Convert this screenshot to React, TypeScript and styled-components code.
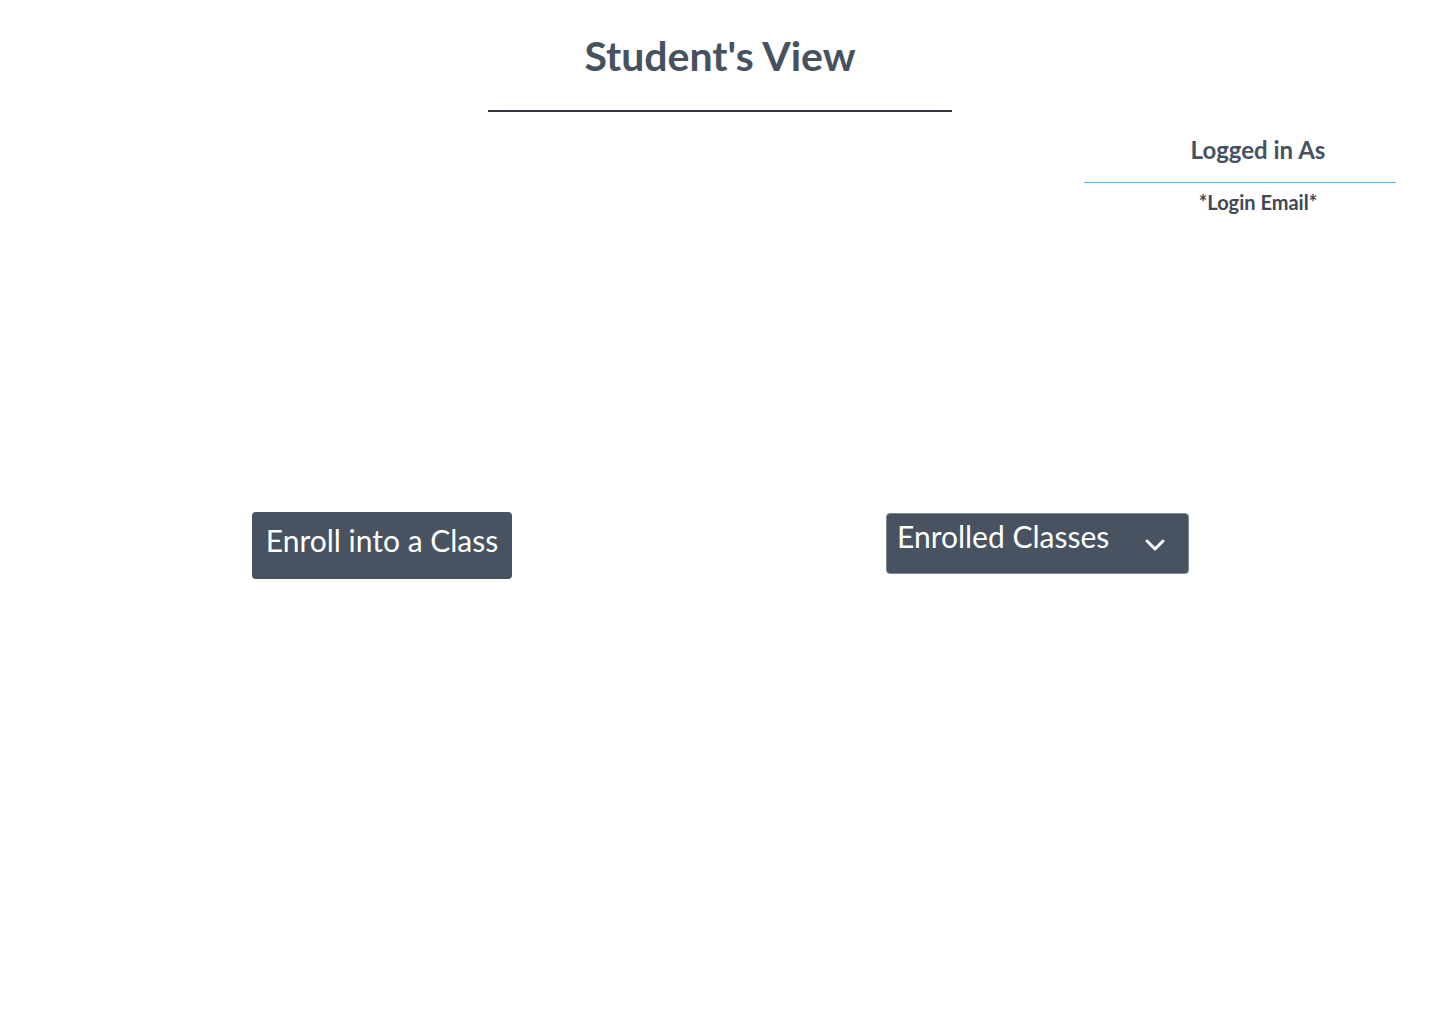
import React from "react";
import styled, { createGlobalStyle } from "styled-components";

const Global = createGlobalStyle`
  html, body { margin: 0; padding: 0; background: #ffffff; }
  body { font-family: Lato, "Noto Sans", sans-serif; color: #475260; }
`;

const Page = styled.div`
  width: 1440px;
  min-height: 1024px;
  display: flex;
  flex-direction: column;
`;

const Header = styled.header`
  display: flex;
  flex-direction: column;
  align-items: center;
  padding-top: 30px;
`;

const Title = styled.h1`
  margin: 0;
  font-size: 41px;
  font-weight: 700;
  line-height: 52px;
  color: #475260;
  width: 464px;
  text-align: center;
  padding-bottom: 28px;
  border-bottom: 2px solid #33373d;
`;

const UserRow = styled.div`
  display: flex;
  justify-content: flex-end;
  padding-right: 44px;
  margin-top: 22px;
`;

const UserCard = styled.div`
  width: 312px;
  display: flex;
  flex-direction: column;
  align-items: stretch;
`;

const UserLabel = styled.div`
  text-align: center;
  font-size: 24px;
  font-weight: 700;
  line-height: 32px;
  padding: 0 0 16px 36px;
  border-bottom: 1px solid #40bdf4;
`;

const UserEmail = styled.div`
  margin-top: 5px;
  padding-left: 36px;
  text-align: center;
  font-size: 20px;
  font-weight: 700;
  line-height: 28px;
  color: #3f4753;
`;

const Actions = styled.div`
  display: flex;
  align-items: flex-start;
  padding-left: 252px;
  margin-top: 296px;
  gap: 374px;
`;

const ActionButton = styled.button`
  font-family: Lato, "Noto Sans", sans-serif;
  font-size: 30px;
  font-weight: 400;
  color: #ffffff;
  background: #485260;
  border: none;
  border-radius: 4px;
  height: 67px;
  width: 260px;
  padding: 0 14px;
  white-space: nowrap;
  line-height: 56px;
  display: flex;
  align-items: flex-start;
  justify-content: center;
  cursor: pointer;
`;

const Dropdown = styled.button`
  font-family: Lato, "Noto Sans", sans-serif;
  font-size: 30px;
  font-weight: 400;
  color: #ffffff;
  background: #485260;
  border: 1px solid #7d8896;
  border-radius: 4px;
  height: 61px;
  width: 303px;
  margin-top: 1px;
  padding: 0 0 0 10px;
  display: flex;
  align-items: flex-start;
  white-space: nowrap;
  cursor: pointer;
`;

const DropLabel = styled.span`
  line-height: 44px;
  flex: 1;
  text-align: left;
`;

const Chevron = styled.span`
  width: 22px;
  margin-right: 22px;
  margin-top: 23px;
  display: flex;
`;

export default function App() {
  return (
    <Page>
      <Global />
      <Header>
        <Title>Student's View</Title>
      </Header>
      <UserRow>
        <UserCard>
          <UserLabel>Logged in As</UserLabel>
          <UserEmail>*Login Email*</UserEmail>
        </UserCard>
      </UserRow>
      <Actions>
        <ActionButton>Enroll into a Class</ActionButton>
        <Dropdown>
          <DropLabel>Enrolled Classes</DropLabel>
          <Chevron>
            <svg width="22" height="16" viewBox="0 0 22 16" fill="none">
              <path d="M3 4l8 8 8-8" stroke="#ffffff" strokeWidth="3" strokeLinecap="round" strokeLinejoin="round" />
            </svg>
          </Chevron>
        </Dropdown>
      </Actions>
    </Page>
  );
}
